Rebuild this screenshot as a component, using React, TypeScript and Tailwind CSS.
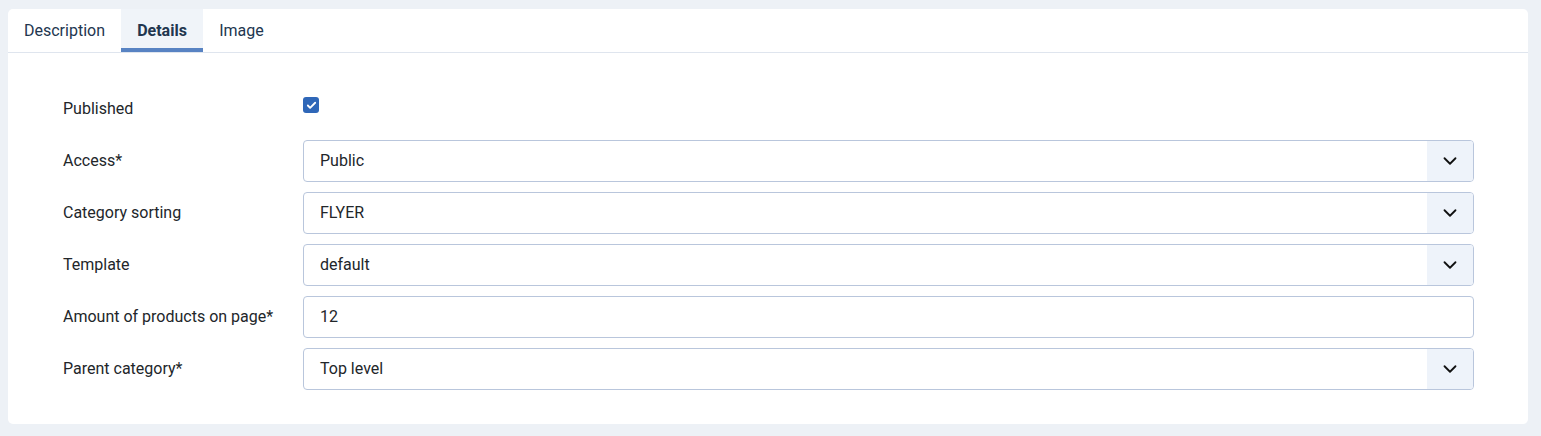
import { ChevronDown, Check } from 'lucide-react';

const rows = [
  { label: 'Access*', value: 'Public', select: true },
  { label: 'Category sorting', value: 'FLYER', select: true },
  { label: 'Template', value: 'default', select: true },
  { label: 'Amount of products on page*', value: '12', select: false },
  { label: 'Parent category*', value: 'Top level', select: true },
];

export default function App() {
  return (
    <div className="min-h-[436px] bg-[#edf1f6] pl-2 pr-[13px] pt-[9px] pb-3 font-['Roboto',sans-serif] text-[16px] text-[#22262a]">
      <div className="rounded-[5px] bg-white">
        <div className="flex border-b border-[#dfe5ee] text-[#22364f]">
          <div className="w-[113px] h-[43px] flex items-center justify-center">Description</div>
          <div className="w-[82px] h-[43px] flex items-center justify-center bg-[#f0f4f9] border-b-4 border-[#5883c3] pt-1 font-bold">Details</div>
          <div className="w-[77px] h-[43px] flex items-center justify-center">Image</div>
        </div>
        <div className="pl-[55px] pr-[54px] pt-[43px] pb-[34px]">
          <div className="flex items-start mb-[20px]">
            <div className="w-[240px] leading-6 pt-[1px] -mb-[1px]">Published</div>
            <div className="w-4 h-4 mt-[1px] rounded-[3px] bg-[#2f67b8] flex items-center justify-center">
              <Check size={11} strokeWidth={4} color="white" />
            </div>
          </div>
          <div className="flex flex-col gap-[10px]">
            {rows.map((r) => (
              <div key={r.label} className="flex items-center">
                <div className="w-[240px]">{r.label}</div>
                <div className="flex-1 h-[42px] flex items-center border border-[#b9c6dc] rounded-[4px] overflow-hidden">
                  <div className="flex-1 px-4">{r.value}</div>
                  {r.select && (
                    <div className="w-[46px] h-full bg-[#eef3fa] flex items-center justify-center">
                      <ChevronDown size={22} strokeWidth={2} color="#111" />
                    </div>
                  )}
                </div>
              </div>
            ))}
          </div>
        </div>
      </div>
    </div>
  );
}
